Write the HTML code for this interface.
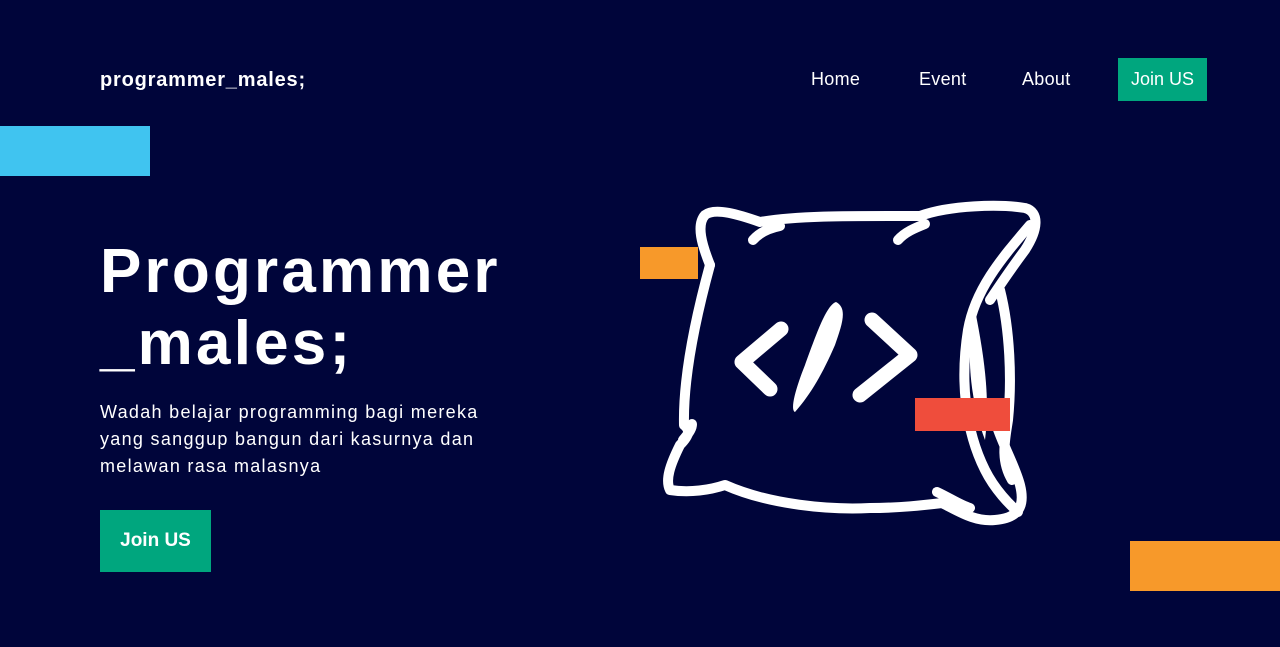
<!DOCTYPE html>
<html><head><meta charset="utf-8"><style>
body{margin:0;width:1280px;height:647px;background:#00053a;overflow:hidden;position:relative;font-family:"Liberation Sans",sans-serif;color:#fff}
.a{position:absolute}
.logo{left:100px;top:69px;font-size:20px;font-weight:bold;letter-spacing:0.8px}
.nav{top:69px;font-size:18px;letter-spacing:0.3px}
.btn{background:#00a67e;color:#fff}
h1{position:absolute;left:100px;top:236px;margin:0;font-size:62px;line-height:72px;font-weight:bold;letter-spacing:3.2px}
p{position:absolute;left:100px;top:399px;margin:0;font-size:18px;line-height:27px;width:400px;letter-spacing:1.3px}
</style></head><body>
<div class="a logo">programmer_males;</div>
<div class="a nav" style="left:811px">Home</div>
<div class="a nav" style="left:919px">Event</div>
<div class="a nav" style="left:1022px">About</div>
<div class="a btn" style="left:1118px;top:58px;width:89px;height:43px;line-height:43px;text-align:center;font-size:18px">Join US</div>
<div class="a" style="left:0;top:126px;width:150px;height:50px;background:#40c4f0"></div>
<h1>Programmer<br>_males;</h1>
<p>Wadah belajar programming bagi mereka<br>yang sanggup bangun dari kasurnya dan<br>melawan rasa malasnya</p>
<div class="a btn" style="left:100px;top:510px;width:111px;height:62px;line-height:62px;text-align:center;font-size:19px;font-weight:bold">Join US</div>
<div class="a" style="left:1130px;top:541px;width:150px;height:50px;background:#f7992a"></div>
<div class="a" style="left:640px;top:247px;width:58px;height:32px;background:#f7992a"></div>
<svg class="a" style="left:0;top:0" width="1280" height="647" viewBox="0 0 1280 647">
<g fill="none" stroke="#fff" stroke-width="10" stroke-linecap="round" stroke-linejoin="round">
<path d="M710 265 C702 245 696 225 705 215 C715 207 740 215 760 222 C800 215 860 216 920 216 C950 205 1000 204 1025 208 C1040 212 1038 230 1025 250 C1010 270 1000 285 990 300"/>
<path d="M753 240 C760 232 770 228 780 226"/>
<path d="M898 240 C905 232 915 228 925 224"/>
<path d="M710 265 C695 320 683 380 684 425 C690 430 690 435 680 445 C670 465 665 480 670 490 C690 493 710 490 725 485 C770 505 830 510 870 508 C900 508 925 505 942 503 C960 512 975 522 995 520 C1020 518 1025 505 1020 485 C1015 465 1000 440 995 420"/>
<path d="M683 440 C690 432 692 428 692 424"/>
<path d="M937 492 C950 498 960 505 970 508"/>
<path d="M1030 225 C1000 260 975 290 968 330 C960 380 965 430 985 470 C995 490 1010 505 1018 512"/>
<path d="M1000 290 C1010 330 1012 380 1008 420 C1005 440 1000 460 1012 480"/>
</g>
<path d="M975 310 C985 360 990 400 985 440 C970 400 965 350 975 310 Z" fill="#fff"/>
<g fill="none" stroke="#fff" stroke-width="15" stroke-linecap="round" stroke-linejoin="round">
<path d="M781 329 L742 362 L770 389"/>
<path d="M872 320 L910 355 L860 395"/>
</g>
<path d="M836 302 C848 308 842 325 835 345 C822 375 810 395 795 412 C790 410 795 390 805 365 C815 338 826 305 836 302 Z" fill="#fff"/>
<rect x="915" y="398" width="95" height="33" fill="#ef4d3c"/>
</svg>
</body></html>
